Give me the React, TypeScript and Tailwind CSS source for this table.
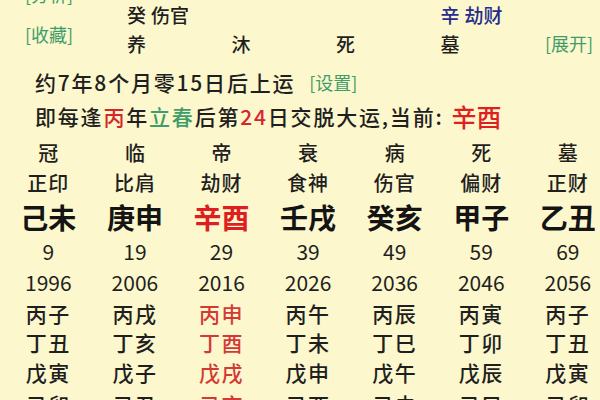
import React from "react";

type Pillar = {
  zs: string;
  ss: string;
  gz: string;
  age: number;
  year: number;
  yrs: string[];
  cur?: boolean;
};

const pillars: Pillar[] = [
  { zs: "冠", ss: "正印", gz: "己未", age: 9, year: 1996, yrs: ["丙子", "丁丑", "戊寅", "己卯"] },
  { zs: "临", ss: "比肩", gz: "庚申", age: 19, year: 2006, yrs: ["丙戌", "丁亥", "戊子", "己丑"] },
  { zs: "帝", ss: "劫财", gz: "辛酉", age: 29, year: 2016, yrs: ["丙申", "丁酉", "戊戌", "己亥"], cur: true },
  { zs: "衰", ss: "食神", gz: "壬戌", age: 39, year: 2026, yrs: ["丙午", "丁未", "戊申", "己酉"] },
  { zs: "病", ss: "伤官", gz: "癸亥", age: 49, year: 2036, yrs: ["丙辰", "丁巳", "戊午", "己未"] },
  { zs: "死", ss: "偏财", gz: "甲子", age: 59, year: 2046, yrs: ["丙寅", "丁卯", "戊辰", "己巳"] },
  { zs: "墓", ss: "正财", gz: "乙丑", age: 69, year: 2056, yrs: ["丙子", "丁丑", "戊寅", "己卯"] },
];

const Cell: React.FC<{ h: string; className?: string; children: React.ReactNode }> = ({ h, className = "", children }) => (
  <div className={`${h} flex items-center justify-center leading-none whitespace-nowrap ${className}`}>{children}</div>
);

const App: React.FC = () => {
  return (
    <div className="w-[600px] h-[400px] overflow-hidden bg-[#fcf7cd] text-[#1f1f1f] font-['Noto_Sans_CJK_SC',sans-serif]">
      {/* header: hidden stems + twelve stages */}
      <div className="flex h-[64px]">
        <div className="w-[127px] pl-[25px] -mt-[26px] flex flex-col text-[18px] text-[#3f9d6b] leading-none">
          <div className="h-[40px] flex items-center">[分析]</div>
          <div className="h-[40px] flex items-center">[收藏]</div>
        </div>
        <div className="grid grid-cols-[repeat(4,104.5px)] grid-rows-[28px_30px] text-[19px] leading-none font-medium">
          <div className="flex items-center gap-[5px]">
            <span>癸</span>
            <span>伤官</span>
          </div>
          <div />
          <div />
          <div className="flex items-center gap-[5px] text-[#262d8c]">
            <span>辛</span>
            <span>劫财</span>
          </div>
          <div className="flex items-center">养</div>
          <div className="flex items-center">沐</div>
          <div className="flex items-center">死</div>
          <div className="flex items-center">墓</div>
        </div>
        <div className="flex flex-col">
          <div className="h-[28px]" />
          <div className="h-[30px] flex items-center text-[18px] text-[#3f9d6b] leading-none">[展开]</div>
        </div>
      </div>

      {/* start of luck */}
      <div className="h-[36px] flex items-center pl-[35px] leading-none font-medium">
        <span className="text-[21px] tracking-[1.8px]">约7年8个月零15日后上运</span>
        <span className="ml-[14px] text-[18px] font-normal text-[#3f9d6b]">[设置]</span>
      </div>
      <div className="h-[32px] flex items-center pl-[35px] leading-none text-[21px] tracking-[1.8px] whitespace-nowrap font-medium">
        <span>即每逢</span>
        <span className="text-[#d7262b]">丙</span>
        <span>年</span>
        <span className="text-[#3f9d6b]">立春</span>
        <span>后第</span>
        <span className="text-[#d7262b]">24</span>
        <span>日交脱大运,当前:</span>
        <span className="ml-[8px] text-[25px] tracking-[0px] text-[#e0201f]">辛酉</span>
      </div>

      {/* big luck pillars */}
      <div className="pt-[5px] pl-[5px] grid grid-cols-[repeat(7,86.6px)] font-medium">
        {pillars.map((p) => (
          <Cell key={"zs" + p.year} h="h-[32px]" className="text-[20px]">{p.zs}</Cell>
        ))}
        {pillars.map((p) => (
          <Cell key={"ss" + p.year} h="h-[28px]" className="text-[20px] tracking-[1px]">{p.ss}</Cell>
        ))}
        {pillars.map((p) => (
          <Cell
            key={"gz" + p.year}
            h="h-[40px]"
            className={`text-[28px] font-bold ${p.cur ? "text-[#dd1f1f]" : "text-[#141414]"}`}
          >
            {p.gz}
          </Cell>
        ))}
        {pillars.map((p) => (
          <Cell key={"age" + p.year} h="h-[28px]" className="text-[21px] font-normal">{p.age}</Cell>
        ))}
        {pillars.map((p) => (
          <Cell key={"yr" + p.year} h="h-[34px]" className="text-[21px] font-normal">{p.year}</Cell>
        ))}
        {[0, 1, 2, 3].map((i) =>
          pillars.map((p) => (
            <Cell
              key={"y" + i + p.year}
              h={i === 0 ? "h-[28px]" : i === 1 ? "h-[30px]" : i === 2 ? "h-[31px]" : "h-[32px]"}
              className={`text-[21px] tracking-[1.5px] ${p.cur ? "text-[#d43a35]" : ""}`}
            >
              {p.yrs[i]}
            </Cell>
          ))
        )}
      </div>
    </div>
  );
};

export default App;
